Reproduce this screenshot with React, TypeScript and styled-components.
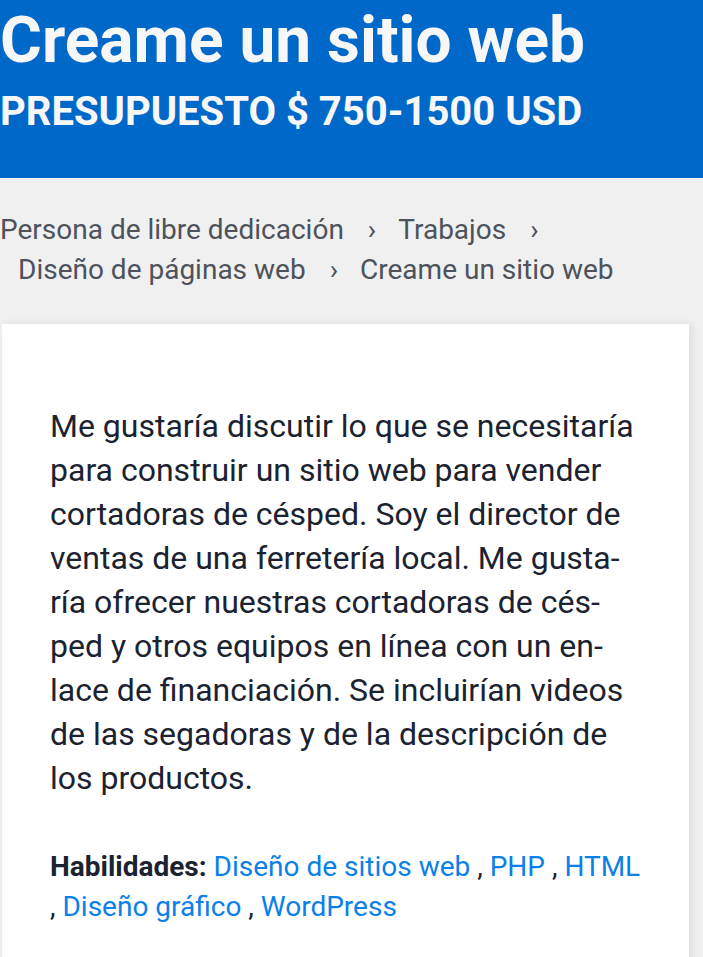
import React from "react";
import styled, { createGlobalStyle } from "styled-components";

const GlobalStyle = createGlobalStyle`
  html, body {
    margin: 0;
    padding: 0;
    background: #f0f0f0;
    font-family: Roboto, "Noto Sans", Arial, sans-serif;
  }
  * { box-sizing: border-box; }
`;

const Page = styled.div`
  width: 703px;
  min-height: 957px;
  background: #f0f0f0;
  overflow: hidden;
`;

const Hero = styled.header`
  background: #0068c8;
  color: #f7f7f7;
  height: 178px;
  padding: 5px 0 0 0;
`;

const Title = styled.h1`
  margin: 0;
  font-size: 64px;
  font-weight: 700;
  line-height: 72px;
`;

const Budget = styled.div`
  margin-top: 11px;
  font-size: 40px;
  font-weight: 700;
  line-height: 48px;
`;

const Crumbs = styled.nav`
  padding: 32px 60px 34px 0;
  font-size: 28px;
  line-height: 40px;
  color: #4d525b;
`;

const Crumb = styled.span<{ $first?: boolean }>`
  display: inline-block;
  padding-left: ${(p) => (p.$first ? "0" : "18px")};
  white-space: nowrap;
`;

const Sep = styled.span`
  display: inline-block;
  margin-left: 24px;
  margin-right: 4px;
`;

const Card = styled.article`
  margin-left: 2px;
  width: 687px;
  background: #ffffff;
  box-shadow: 3px 0 8px rgba(0, 0, 0, 0.08);
  padding: 80px 44px 40px 48px;
`;

const Description = styled.p`
  margin: 0;
  padding-right: 8px;
  font-size: 32px;
  line-height: 44px;
  color: #1b2230;
`;

const Skills = styled.p`
  margin: 47px 0 0 0;
  font-size: 28px;
  line-height: 40px;
  color: #1b2230;
`;

const Label = styled.strong`
  font-weight: 700;
`;

const SkillLink = styled.a`
  color: #0a80e8;
  text-decoration: none;
`;

const crumbs = [
  "Persona de libre dedicación",
  "Trabajos",
  "Diseño de páginas web",
  "Creame un sitio web",
];

const skills = [
  "Diseño de sitios web",
  "PHP",
  "HTML",
  "Diseño gráfico",
  "WordPress",
];

export default function App() {
  return (
    <Page>
      <GlobalStyle />
      <Hero>
        <Title>Creame un sitio web</Title>
        <Budget>PRESUPUESTO $ 750-1500 USD</Budget>
      </Hero>
      <Crumbs>
        {crumbs.map((c, i) => (
          <Crumb key={c} $first={i === 0}>
            {c}
            {i < crumbs.length - 1 && <Sep>›</Sep>}
          </Crumb>
        ))}
      </Crumbs>
      <Card>
        <Description>
          Me gustaría discutir lo que se necesitaría para construir un sitio web
          para vender cortadoras de césped. Soy el director de ventas de una
          ferretería local. Me gusta&shy;ría ofrecer nuestras cortadoras de
          cés&shy;ped y otros equipos en línea con un en&shy;lace de financiación.
          Se incluirían videos de las segadoras y de la descripción de los
          productos.
        </Description>
        <Skills>
          <Label>Habilidades:</Label>{" "}
          {skills.map((s, i) => (
            <React.Fragment key={s}>
              <SkillLink href="#">{s}</SkillLink>
              {i < skills.length - 1 && " , "}
            </React.Fragment>
          ))}
        </Skills>
      </Card>
    </Page>
  );
}
